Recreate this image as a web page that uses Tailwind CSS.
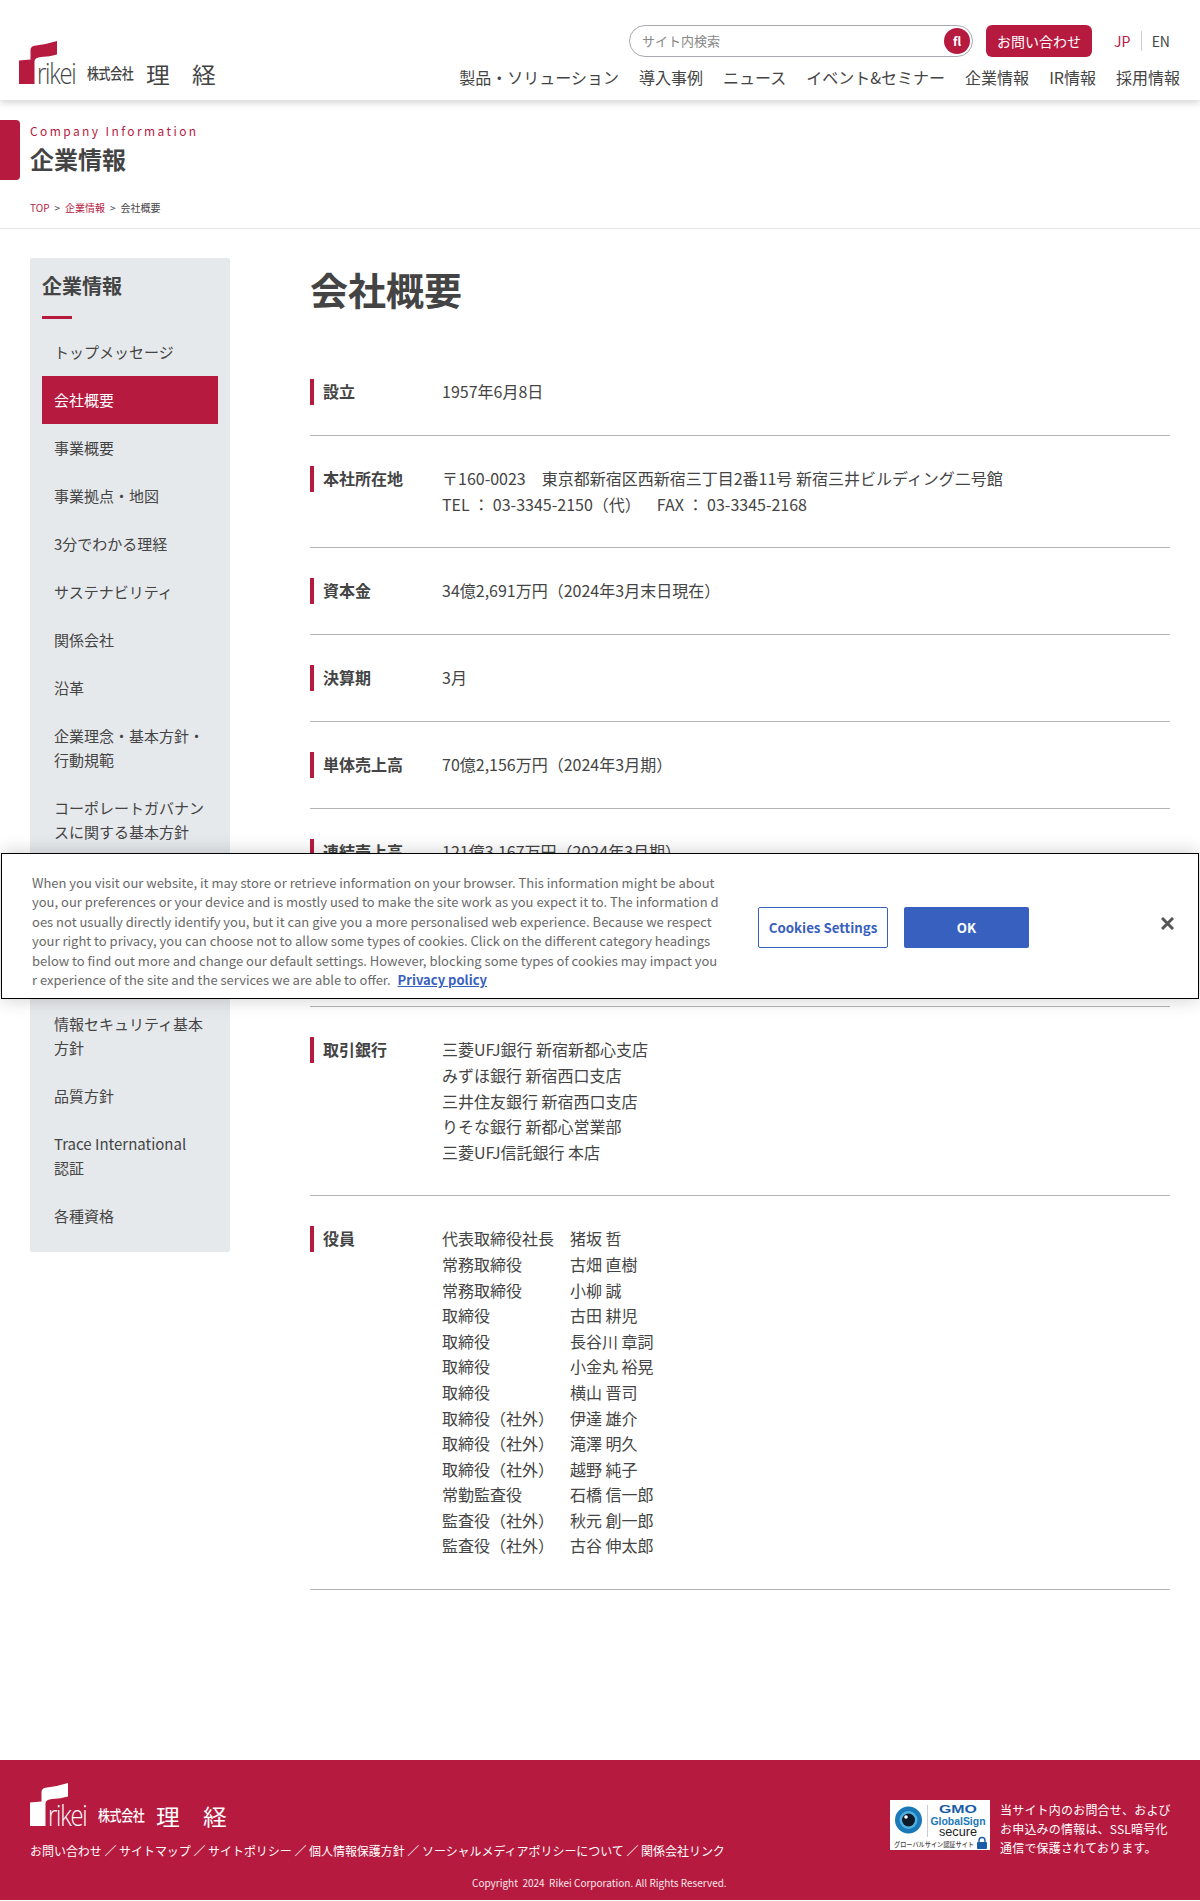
<!DOCTYPE html>
<html lang="ja">
<head>
    <meta charset="UTF-8">
    <meta name="viewport" content="width=device-width, initial-scale=1.0">
    <title>会社概要 | 株式会社理経</title>
    <script src="https://cdn.jsdelivr.net/npm/@tailwindcss/browser@4"></script>
</head>
<body class="relative bg-white text-[#444] font-['Noto_Sans_CJK_JP','Noto_Sans',sans-serif]">

    <!-- Header -->
    <header class="h-[100px] flex justify-between bg-white shadow-[0_2px_8px_rgba(0,0,0,0.2)]">
        <div class="relative w-[240px] h-[100px]">
            <svg class="absolute left-[19px] top-[41px] w-[40px] h-[44px]" viewBox="0 0 40 44"><path fill="#b71a3f" d="M0 19.500L11.500 18.500L11.500 9Q11.500 5.500 15.500 4.800Q27 3.500 38 0L38 13.500Q31 15.500 22 16Q16 16.500 15.500 20L15.500 43L0 43Z"/></svg>
            <span class="absolute left-[37px] top-[58px] text-[29px] leading-[30px] font-light tracking-[-1.500px] font-['Open_Sans',sans-serif] scale-x-[0.82] origin-left">rikei</span>
            <span class="absolute left-[87px] top-[63px] text-[15px] leading-[20px] font-medium tracking-[-0.500px] scale-x-[0.8] origin-left whitespace-nowrap">株式会社</span>
            <span class="absolute left-[146px] top-[61px] text-[22px] leading-[24px] font-normal scale-x-[1.08] origin-left">理</span>
            <span class="absolute left-[192px] top-[61px] text-[22px] leading-[24px] font-normal scale-x-[1.08] origin-left">経</span>
        </div>
        <div class="flex flex-col items-end pr-[20px] pt-[25px]">
            <div class="flex items-center h-[32px]">
                <div class="w-[344px] h-[32px] rounded-full border border-[#aaaab2] flex items-center justify-between pl-[12px] pr-[2px]">
                    <span class="text-[13px] text-[#888]">サイト内検索</span>
                    <span class="w-[26px] h-[26px] rounded-full bg-[#b71a3f] text-white text-[12px] font-bold flex items-center justify-center">fl</span>
                </div>
                <a class="ml-[13px] w-[106px] h-[32px] rounded-[6px] bg-[#b71a3f] text-white text-[14px] flex items-center justify-center">お問い合わせ</a>
                <div class="ml-[22px] mr-[10px] flex items-center text-[14px] w-[56px]">
                    <span class="text-[#b71a3f] w-[27px]">JP</span>
                    <span class="w-px h-[20px] bg-[#ccc]"></span>
                    <span class="ml-[10px]">EN</span>
                </div>
            </div>
            <nav class="flex gap-[20px] mt-[7px] text-[16px] leading-[26px]">
                <a>製品・ソリューション</a>
                <a>導入事例</a>
                <a>ニュース</a>
                <a>イベント&amp;セミナー</a>
                <a>企業情報</a>
                <a>IR情報</a>
                <a>採用情報</a>
            </nav>
        </div>
    </header>

    <!-- Page title -->
    <section class="h-[129px] border-b border-[#e5e5e5]">
        <div class="relative pt-[21px] h-[80px] pl-[30px]">
            <div class="absolute left-0 top-[20px] w-[20px] h-[60px] bg-[#b71a3f] rounded-r-[4px]"></div>
            <p class="text-[12px] leading-[20px] tracking-[2.400px] text-[#b71a3f]">Company Information</p>
            <h2 class="text-[24px] leading-[35px] font-bold">企業情報</h2>
        </div>
        <div class="pl-[30px] mt-[20px] text-[10px] leading-[16px] flex gap-[5px]">
            <a class="text-[#b71a3f]">TOP</a><span>&gt;</span><a class="text-[#b71a3f]">企業情報</a><span>&gt;</span><span>会社概要</span>
        </div>
    </section>

    <!-- Body -->
    <div class="flex items-start pl-[30px] pt-[29px] h-[1531px]">
        <aside class="w-[200px] bg-[#e6e9ec] rounded-[2px] p-[12px] shrink-0">
            <h3 class="text-[20px] leading-[32px] font-bold">企業情報</h3>
            <div class="w-[30px] h-[3px] bg-[#b71a3f] mt-[14px] mb-[9px]"></div>
            <ul class="text-[15px] leading-[24px]">
                <li class="py-[12px] px-[12px]">トップメッセージ</li>
                <li class="py-[12px] px-[12px] bg-[#b71a3f] text-white">会社概要</li>
                <li class="py-[12px] px-[12px]">事業概要</li>
                <li class="py-[12px] px-[12px]">事業拠点・地図</li>
                <li class="py-[12px] px-[12px]">3分でわかる理経</li>
                <li class="py-[12px] px-[12px]">サステナビリティ</li>
                <li class="py-[12px] px-[12px]">関係会社</li>
                <li class="py-[12px] px-[12px]">沿革</li>
                <li class="py-[12px] px-[12px]">企業理念・基本方針・行動規範</li>
                <li class="py-[12px] px-[12px]">コーポレートガバナンスに関する基本方針</li>
                <li class="py-[12px] px-[12px]">IRポリシー</li>
                <li class="py-[12px] px-[12px]">個人情報保護方針</li>
                <li class="py-[12px] px-[12px]">環境方針</li>
                <li class="py-[12px] px-[12px]">情報セキュリティ基本方針</li>
                <li class="py-[12px] px-[12px]">品質方針</li>
                <li class="py-[12px] px-[12px]">Trace International<br>認証</li>
                <li class="py-[12px] px-[12px]">各種資格</li>
            </ul>
        </aside>

        <main class="ml-[80px] w-[860px]">
            <h1 class="text-[38px] leading-[61px] font-bold mb-[30px]">会社概要</h1>
            <dl class="text-[16px] leading-[25.600px]">
                <div class="flex py-[30px] border-b border-[#b3b3b3]">
                    <dt class="w-[132px] shrink-0 border-l-4 border-[#b71a3f] pl-[9px] font-bold h-[26px]">設立</dt>
                    <dd>1957年6月8日</dd>
                </div>
                <div class="flex py-[30px] border-b border-[#b3b3b3]">
                    <dt class="w-[132px] shrink-0 border-l-4 border-[#b71a3f] pl-[9px] font-bold h-[26px]">本社所在地</dt>
                    <dd>〒160-0023　東京都新宿区西新宿三丁目2番11号 新宿三井ビルディング二号館<br>TEL ： 03-3345-2150（代）　<span class="ml-[8px]">FAX ： 03-3345-2168</span></dd>
                </div>
                <div class="flex py-[30px] border-b border-[#b3b3b3]">
                    <dt class="w-[132px] shrink-0 border-l-4 border-[#b71a3f] pl-[9px] font-bold h-[26px]">資本金</dt>
                    <dd>34億2,691万円（2024年3月末日現在）</dd>
                </div>
                <div class="flex py-[30px] border-b border-[#b3b3b3]">
                    <dt class="w-[132px] shrink-0 border-l-4 border-[#b71a3f] pl-[9px] font-bold h-[26px]">決算期</dt>
                    <dd>3月</dd>
                </div>
                <div class="flex py-[30px] border-b border-[#b3b3b3]">
                    <dt class="w-[132px] shrink-0 border-l-4 border-[#b71a3f] pl-[9px] font-bold h-[26px]">単体売上高</dt>
                    <dd>70億2,156万円（2024年3月期）</dd>
                </div>
                <div class="flex py-[30px] border-b border-[#b3b3b3]">
                    <dt class="w-[132px] shrink-0 border-l-4 border-[#b71a3f] pl-[9px] font-bold h-[26px]">連結売上高</dt>
                    <dd>121億3,167万円（2024年3月期）</dd>
                </div>
                <div class="flex pt-[30px] pb-[29px] border-b border-[#b3b3b3]">
                    <dt class="w-[132px] shrink-0 border-l-4 border-[#b71a3f] pl-[9px] font-bold h-[26px]">従業員数</dt>
                    <dd>単体 178名<br>連結 309名</dd>
                </div>
                <div class="flex py-[30px] border-b border-[#b3b3b3]">
                    <dt class="w-[132px] shrink-0 border-l-4 border-[#b71a3f] pl-[9px] font-bold h-[26px]">取引銀行</dt>
                    <dd>三菱UFJ銀行 新宿新都心支店<br>みずほ銀行 新宿西口支店<br>三井住友銀行 新宿西口支店<br>りそな銀行 新都心営業部<br>三菱UFJ信託銀行 本店</dd>
                </div>
                <div class="flex py-[30px] border-b border-[#b3b3b3]">
                    <dt class="w-[132px] shrink-0 border-l-4 border-[#b71a3f] pl-[9px] font-bold h-[26px]">役員</dt>
                    <dd class="grid grid-cols-[128px_1fr]">
                        <span>代表取締役社長</span><span>猪坂 哲</span>
                        <span>常務取締役</span><span>古畑 直樹</span>
                        <span>常務取締役</span><span>小柳 誠</span>
                        <span>取締役</span><span>古田 耕児</span>
                        <span>取締役</span><span>長谷川 章詞</span>
                        <span>取締役</span><span>小金丸 裕晃</span>
                        <span>取締役</span><span>横山 晋司</span>
                        <span>取締役（社外）</span><span>伊達 雄介</span>
                        <span>取締役（社外）</span><span>滝澤 明久</span>
                        <span>取締役（社外）</span><span>越野 純子</span>
                        <span>常勤監査役</span><span>石橋 信一郎</span>
                        <span>監査役（社外）</span><span>秋元 創一郎</span>
                        <span>監査役（社外）</span><span>古谷 伸太郎</span>
                    </dd>
                </div>
            </dl>
        </main>
    </div>

    <!-- Footer -->
    <footer class="relative h-[140px] bg-[#b71a3f] text-white">
        <div class="absolute left-0 top-0 w-[240px] h-[80px]">
            <svg class="absolute left-[30px] top-[23px] w-[40px] h-[44px]" viewBox="0 0 40 44"><path fill="#fff" d="M0 19.500L11.500 18.500L11.500 9Q11.500 5.500 15.500 4.800Q27 3.500 38 0L38 13.500Q31 15.500 22 16Q16 16.500 15.500 20L15.500 43L0 43Z"/></svg>
            <span class="absolute left-[48px] top-[40px] text-[29px] leading-[30px] font-light tracking-[-1.500px] font-['Open_Sans',sans-serif] scale-x-[0.82] origin-left">rikei</span>
            <span class="absolute left-[98px] top-[45px] text-[15px] leading-[20px] font-medium tracking-[-0.500px] scale-x-[0.8] origin-left whitespace-nowrap">株式会社</span>
            <span class="absolute left-[156px] top-[43px] text-[22px] leading-[24px] scale-x-[1.08] origin-left">理</span>
            <span class="absolute left-[203px] top-[43px] text-[22px] leading-[24px] scale-x-[1.08] origin-left">経</span>
        </div>
        <p class="absolute left-[30px] top-[82px] text-[12px] leading-[18px] tracking-[-0.040px] whitespace-nowrap">お問い合わせ ／ サイトマップ ／ サイトポリシー ／ 個人情報保護方針 ／ ソーシャルメディアポリシーについて ／ 関係会社リンク</p>
        <p class="absolute left-[472px] top-[115px] text-[10px] leading-[16px] whitespace-pre opacity-90">Copyright  2024  Rikei Corporation. All Rights Reserved.</p>
        <div class="absolute left-[890px] top-[40px] w-[100px] h-[50px] bg-white">
            <svg class="w-[100px] h-[50px]" viewBox="0 0 100 50">
                <circle cx="18.500" cy="20" r="13.500" fill="#1a78b8"/>
                <circle cx="18.500" cy="20" r="9" fill="#4fb0e0"/>
                <circle cx="18.500" cy="20" r="6.500" fill="#0c1a2a"/>
                <circle cx="16" cy="17" r="1.800" fill="#fff"/>
                <rect x="37" y="5" width="1" height="32" fill="#ccc"/>
                <text x="68" y="13" text-anchor="middle" font-size="11.500" font-weight="700" fill="#1a5ca8" font-family="Liberation Sans" textLength="38" lengthAdjust="spacingAndGlyphs">GMO</text>
                <text x="68" y="24.500" text-anchor="middle" font-size="11" font-weight="700" fill="#1a78b8" font-family="Liberation Sans" textLength="55" lengthAdjust="spacingAndGlyphs">GlobalSign</text>
                <text x="68" y="36" text-anchor="middle" font-size="12" fill="#222" font-family="Liberation Sans" textLength="38" lengthAdjust="spacingAndGlyphs">secure</text>
                <text x="4" y="47" font-size="6.500" fill="#444" font-weight="500" font-family="Noto Sans CJK JP" textLength="80" lengthAdjust="spacingAndGlyphs">グローバルサイン認証サイト</text>
                <rect x="87" y="42" width="10" height="7" rx="1" fill="#1a5ca8"/>
                <path d="M89 42V40.500a3 3 0 0 1 6 0V42" fill="none" stroke="#1a5ca8" stroke-width="1.400"/>
            </svg>
        </div>
        <p class="absolute left-[1000px] top-[40px] w-[172px] text-[12px] leading-[19px] tracking-[0.200px] whitespace-nowrap">当サイト内のお問合せ、および<br>お申込みの情報は、SSL暗号化<br>通信で保護されております。</p>
    </footer>

    <!-- Cookie banner -->
    <div class="absolute left-[1px] top-[853px] w-[1198px] h-[146px] bg-white border border-black shadow-[0_0_18px_rgba(0,0,0,0.2)]">
        <p class="absolute left-[30px] top-[19px] w-[687px] text-[13px] leading-[19.400px] text-[#696969] break-all">When you visit our website, it may store or retrieve information on your browser. This information might be about you, our preferences or your device and is mostly used to make the site work as you expect it to. The information does not usually directly identify you, but it can give you a more personalised web experience. Because we respect your right to privacy, you can choose not to allow some types of cookies. Click on the different category headings below to find out more and change our default settings. However, blocking some types of cookies may impact your experience of the site and the services we are able to offer. <a class="ml-[4px] font-bold underline text-[#3860be]">Privacy policy</a></p>
        <button class="absolute left-[756px] top-[53px] w-[130px] h-[41px] rounded-[2px] border border-[#3860be] bg-white text-[#3860be] text-[13.300px] font-bold">Cookies Settings</button>
        <button class="absolute left-[902px] top-[53px] w-[125px] h-[41px] rounded-[2px] bg-[#3860be] text-white text-[13.300px] font-bold">OK</button>
        <svg class="absolute left-[1159px] top-[63px] w-[13px] h-[13px]" viewBox="0 0 13 13"><path d="M1 1L12 12M12 1L1 12" stroke="#565656" stroke-width="3" fill="none"/></svg>
    </div>
</body>
</html>
